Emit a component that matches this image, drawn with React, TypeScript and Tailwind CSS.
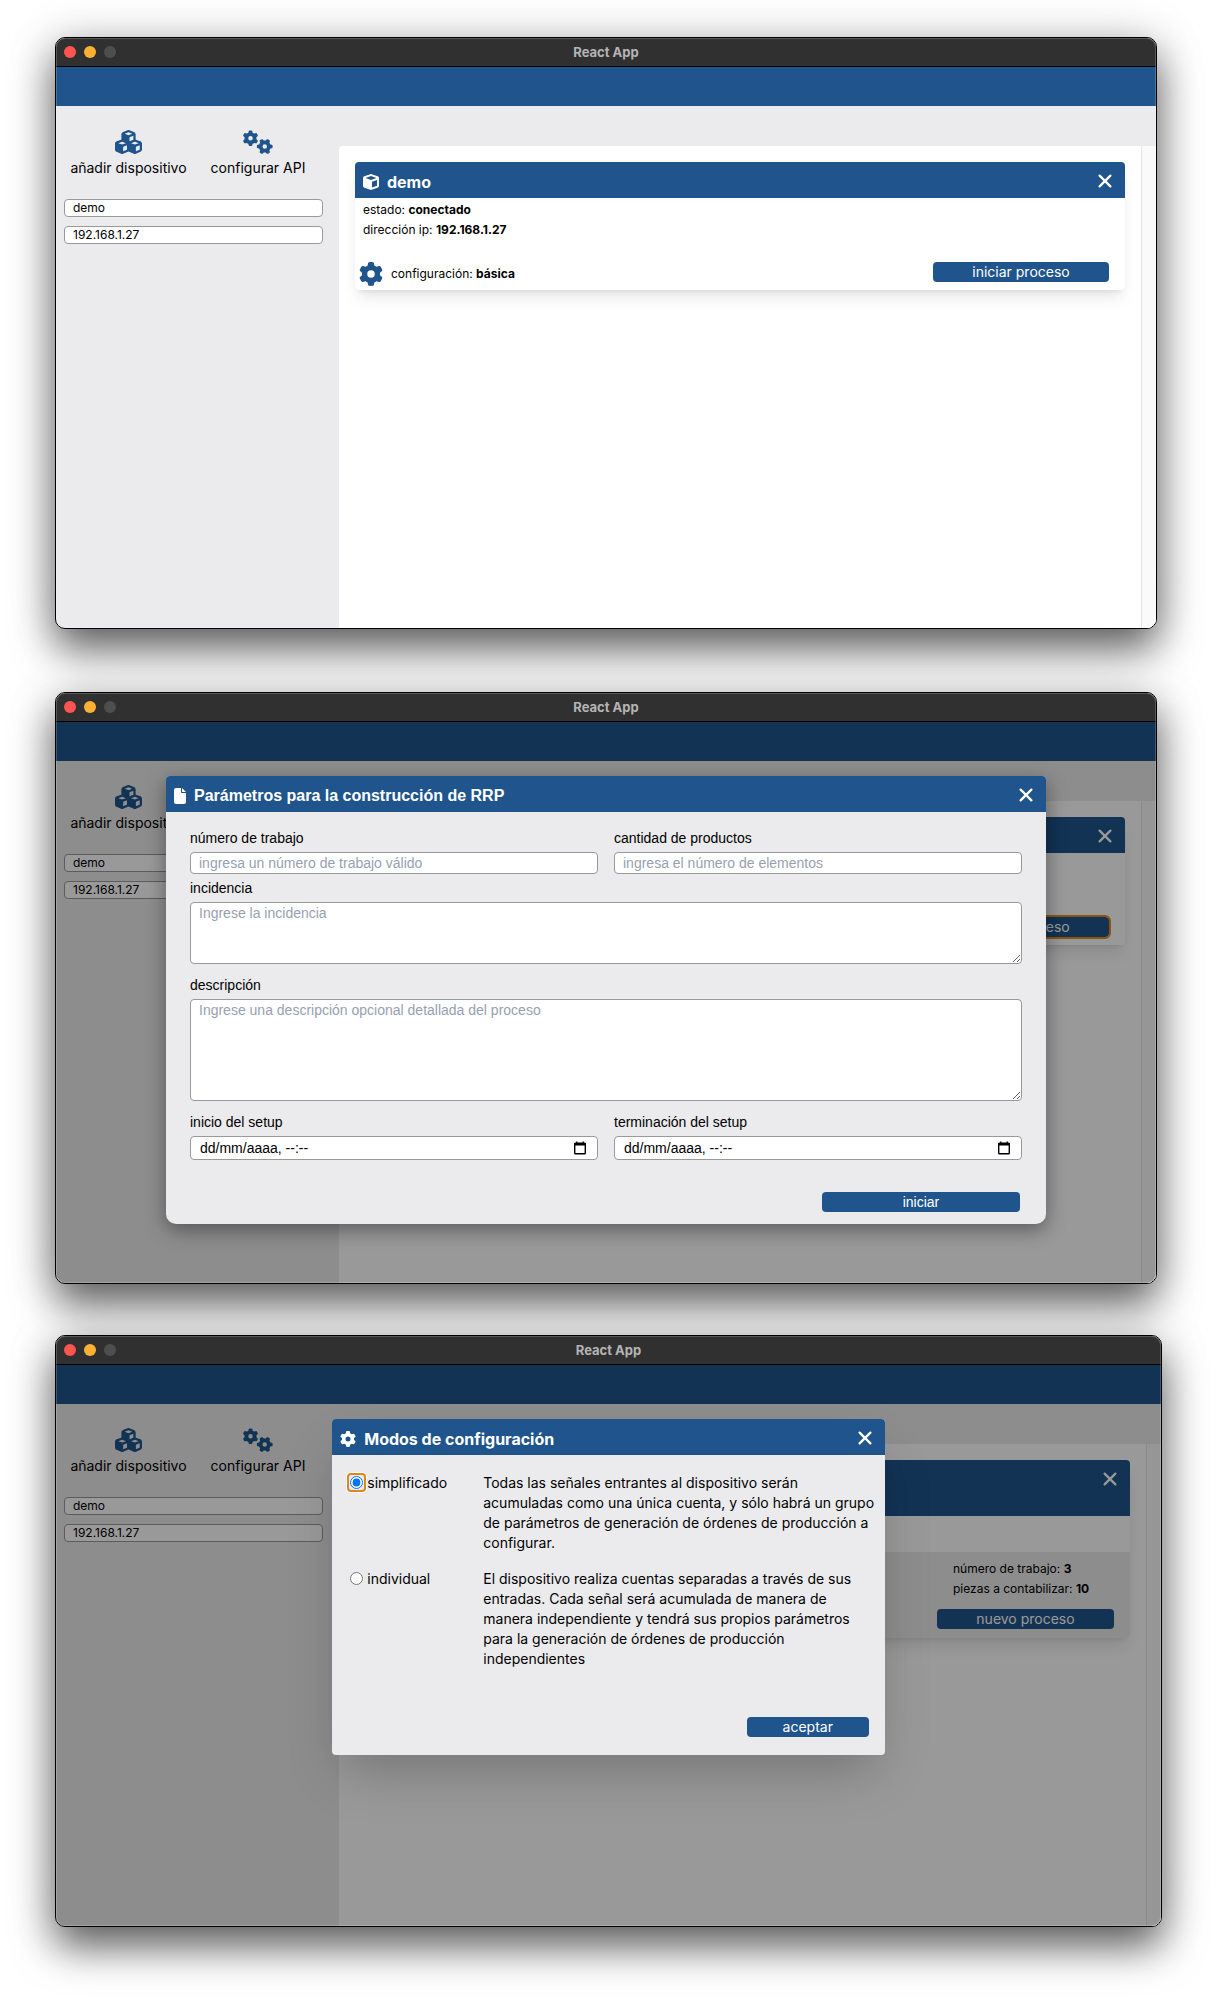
import React, { useId } from "react";
import { FaCube, FaCubes, FaFile, FaGear, FaGears } from "react-icons/fa6";

function CloseIcon() {
  return (
    <svg width="16" height="16" viewBox="0 0 16 16" fill="none" stroke="currentColor" strokeWidth="2.3" strokeLinecap="round" aria-hidden="true">
      <path d="M2.6 2.6 13.4 13.4M13.4 2.6 2.6 13.4" />
    </svg>
  );
}

function CalendarIcon() {
  return (
    <svg width="14" height="14" viewBox="0 0 14 14" fill="none" stroke="currentColor" aria-hidden="true">
      <rect x="1.7" y="2.2" width="10.6" height="10.6" rx="0.8" strokeWidth="1.4" />
      <path d="M1.5 3.4h11" strokeWidth="2.2" />
      <path d="M3.8 0.6v2M10.2 0.6v2" strokeWidth="1.3" />
    </svg>
  );
}

function TitledHeader({ icon, title, children }: { icon: React.ReactNode; title: string; children?: React.ReactNode }) {
  return (
    <header className="rounded-t bg-[#1f558c] px-2 pt-2 pb-1 text-white">
      <div className="flex h-6 items-center gap-2">
        {icon}
        <h2 className="flex-1 text-base font-bold">{title}</h2>
        <button type="button" aria-label="cerrar" className="mr-1 mb-0.5">
          <CloseIcon />
        </button>
      </div>
      {children}
    </header>
  );
}

function ActionButton({ label, className, focused = false }: { label: string; className: string; focused?: boolean }) {
  return (
    <button
      type="button"
      className={`h-5 rounded bg-[#1f558c] text-sm leading-5 text-white ${focused ? "outline-2 outline-[#e88a1a]" : ""} ${className}`}
    >
      {label}
    </button>
  );
}

const deviceInputClass = "h-[18px] w-full rounded border border-[#999] bg-white px-2 pb-0.5 text-xs";

function Sidebar() {
  return (
    <aside className="w-[283px] shrink-0 pl-2 pr-4 pt-6">
      <nav className="flex text-sm leading-5">
        <button type="button" className="flex w-[129px] flex-col items-center gap-1">
          <FaCubes className="h-6 w-[27px] text-[#1f558c]" />
          añadir dispositivo
        </button>
        <button type="button" className="flex flex-1 flex-col items-center gap-1">
          <FaGears className="h-6 w-[30px] text-[#1f558c]" />
          configurar API
        </button>
      </nav>
      <div className="mt-[21px] flex flex-col gap-[9px]">
        <input aria-label="nombre" defaultValue="demo" className={deviceInputClass} />
        <input aria-label="dirección ip" defaultValue="192.168.1.27" className={deviceInputClass} />
      </div>
    </aside>
  );
}

function IdleCard({ focused = false }: { focused?: boolean }) {
  return (
    <article className="rounded bg-white text-xs leading-5 shadow-lg">
      <TitledHeader icon={<FaCube className="size-4" />} title="demo" />
      <div className="px-2 pt-0.5">
        <p>
          estado: <b>conectado</b>
        </p>
        <p>
          dirección ip: <b>192.168.1.27</b>
        </p>
      </div>
      <div className="flex items-start pt-[22px] pr-4 pb-1 pl-1">
        <button type="button" aria-label="configuración" className="text-[#1f558c]">
          <FaGear className="size-6" />
        </button>
        <p className="ml-2 flex-1 leading-6">
          configuración: <b>básica</b>
        </p>
        <ActionButton label="iniciar proceso" className="w-[176px]" focused={focused} />
      </div>
    </article>
  );
}

function RunningCard() {
  return (
    <article className="rounded bg-white text-xs leading-5 shadow-lg">
      <TitledHeader icon={<FaCube className="size-4" />} title="demo">
        <div className="h-5" />
      </TitledHeader>
      <div className="h-9" />
      <div className="flex justify-end rounded-b bg-[#ebebed] pt-[7px] pr-4 pb-2">
        <div className="w-[177px]">
          <div className="pl-4">
            <p>
              número de trabajo: <b>3</b>
            </p>
            <p>
              piezas a contabilizar: <b>10</b>
            </p>
          </div>
          <ActionButton label="nuevo proceso" className="mt-[10px] w-full" />
        </div>
      </div>
    </article>
  );
}

function AppWindow({ card, modal, className }: { card: React.ReactNode; modal?: React.ReactNode; className: string }) {
  return (
    <section
      className={`relative flex min-h-[592px] flex-col overflow-hidden rounded-[10px] border border-black bg-[#ebebed] shadow-[0_20px_40px_rgba(0,0,0,0.6),0_0_50px_rgba(0,0,0,0.15)] ${className}`}
    >
      <div className="relative flex h-[29px] items-center justify-center border-b border-black bg-[#303030]">
        <div className="absolute left-2 flex gap-2">
          <button type="button" aria-label="cerrar ventana" className="size-3 rounded-full bg-[#ff544f]" />
          <button type="button" aria-label="minimizar ventana" className="size-3 rounded-full bg-[#fdb134]" />
          <button type="button" aria-label="ampliar ventana" className="size-3 rounded-full bg-[#4e4e4e]" />
        </div>
        <h1 className="text-[13px] leading-5 font-bold text-[#b4b4b4]">React App</h1>
      </div>
      <div className="relative flex flex-1 flex-col">
        <div className="h-[39px] bg-[#1f558c]" />
        <div className="flex flex-1">
          <Sidebar />
          <main className="mt-10 flex flex-1 rounded-tl bg-white">
            <div className="flex-1 p-4">{card}</div>
            <div className="w-[15px] border-l border-[#e4e4e4] bg-[#fafafa]" />
          </main>
        </div>
        {modal && <div className="absolute inset-0 flex items-start justify-center bg-black/40 pt-[54px]">{modal}</div>}
      </div>
      <div className="pointer-events-none absolute inset-0 rounded-[9px] border border-white/20" />
    </section>
  );
}

function Field({ label, children }: { label: string; children: (id: string) => React.ReactNode }) {
  const id = useId();
  return (
    <div className="flex flex-1 flex-col gap-1">
      <label htmlFor={id}>{label}</label>
      {children(id)}
    </div>
  );
}

const boxClass = "w-full rounded border border-[#999] bg-white px-2 placeholder:text-[#98a1b0]";

function DateField({ label }: { label: string }) {
  return (
    <Field label={label}>
      {(id) => (
        <div className="flex h-6 items-center rounded border border-[#999] bg-white pr-[10px] pl-[9px]">
          <input id={id} defaultValue="dd/mm/aaaa, --:--" className="min-w-0 flex-1" />
          <button type="button" aria-label="abrir calendario">
            <CalendarIcon />
          </button>
        </div>
      )}
    </Field>
  );
}

function ParametersModal() {
  return (
    <form
      role="dialog"
      className="w-4/5 rounded-t rounded-b-[10px] bg-[#ebebed] font-['Liberation_Sans',Arial,sans-serif] text-sm leading-5 shadow-[0_6px_20px_rgba(0,0,0,0.4)]"
    >
      <TitledHeader icon={<FaFile className="h-4 w-3" />} title="Parámetros para la construcción de RRP" />
      <div className="px-6 pt-4 pb-3">
        <div className="flex gap-4">
          <Field label="número de trabajo">
            {(id) => <input id={id} placeholder="ingresa un número de trabajo válido" className={`${boxClass} h-[22px]`} />}
          </Field>
          <Field label="cantidad de productos">
            {(id) => <input id={id} placeholder="ingresa el número de elementos" className={`${boxClass} h-[22px]`} />}
          </Field>
        </div>
        <div className="mt-1 flex">
          <Field label="incidencia">
            {(id) => <textarea id={id} placeholder="Ingrese la incidencia" className={`${boxClass} h-[62px]`} />}
          </Field>
        </div>
        <div className="mt-[11px] flex">
          <Field label="descripción">
            {(id) => <textarea id={id} placeholder="Ingrese una descripción opcional detallada del proceso" className={`${boxClass} h-[102px]`} />}
          </Field>
        </div>
        <div className="mt-[11px] flex gap-4">
          <DateField label="inicio del setup" />
          <DateField label="terminación del setup" />
        </div>
        <div className="mt-8 mr-0.5 flex justify-end">
          <ActionButton label="iniciar" className="w-[198px]" />
        </div>
      </div>
    </form>
  );
}

const modes = [
  {
    name: "simplificado",
    focused: true,
    text: "Todas las señales entrantes al dispositivo serán acumuladas como una única cuenta, y sólo habrá un grupo de parámetros de generación de órdenes de producción a configurar.",
  },
  {
    name: "individual",
    focused: false,
    text: "El dispositivo realiza cuentas separadas a través de sus entradas. Cada señal será acumulada de manera de manera independiente y tendrá sus propios parámetros para la generación de órdenes de producción independientes",
  },
];

function ModesModal() {
  return (
    <form role="dialog" className="w-1/2 rounded bg-[#ebebed] text-sm leading-5 shadow-2xl">
      <TitledHeader icon={<FaGear className="size-4" />} title="Modos de configuración" />
      <div className="flex flex-col gap-4 pt-[18px] pr-2 pl-4">
        {modes.map((mode) => (
          <div key={mode.name} className="flex items-start">
            <label className="flex w-[135px] shrink-0 items-start">
              <span className={`-ml-px mr-px flex rounded border-2 p-px ${mode.focused ? "border-[#e0861f] ring-1 ring-white" : "border-transparent"}`}>
                <input type="radio" name="modo" defaultChecked={mode.focused} className="size-[13px]" />
              </span>
              {mode.name}
            </label>
            <p className="flex-1">{mode.text}</p>
          </div>
        ))}
      </div>
      <div className="flex justify-end px-4 pt-12 pb-[18px]">
        <ActionButton label="aceptar" className="w-[122px]" />
      </div>
    </form>
  );
}

export default function App() {
  return (
    <div className="flex min-h-screen flex-col bg-white pt-[37px] pb-[73px] font-['Inter',sans-serif] text-black">
      <AppWindow className="mr-[60px] ml-[55px]" card={<IdleCard />} />
      <AppWindow className="mt-[63px] mr-[60px] ml-[55px]" card={<IdleCard focused />} modal={<ParametersModal />} />
      <AppWindow className="mt-[51px] mr-[55px] ml-[55px]" card={<RunningCard />} modal={<ModesModal />} />
    </div>
  );
}
